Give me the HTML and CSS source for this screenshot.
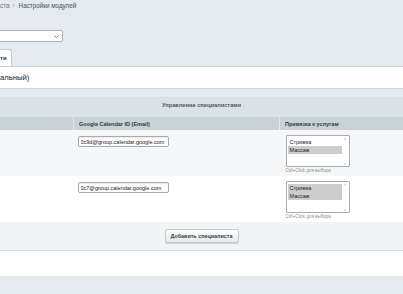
FILE: index.html
```html
<!DOCTYPE html>
<html lang="ru">
<head>
  <meta charset="UTF-8">
  <title>Настройки модулей</title>
  <link rel="stylesheet" href="styles.css">
</head>
<body>

  <!-- Хлебные крошки -->
  <div class="crumbs">
    <span class="crumb">ста</span>
    <span class="crumb-sep">›</span>
    <a class="crumb-link" href="#">Настройки модулей</a>
  </div>

  <!-- Выбор модуля -->
  <div class="module-pick">
    <div class="fake-select">
      <svg class="chevron" width="5" height="3" viewBox="0 0 5 3"><path d="M0.5 0.5 L2.5 2.5 L4.5 0.5" fill="none" stroke="#555" stroke-width="0.8"/></svg>
    </div>
  </div>

  <div class="tabs">
    <span class="tab">ти</span>
  </div>

  <div class="title-box">альный)</div>

  <div class="section-bar">Управление специалистами</div>

  <table class="spec-table">
    <thead>
      <tr>
        <th class="col-name"></th>
        <th class="col-cal">Google Calendar ID (Email)</th>
        <th class="col-serv">Привязка к услугам</th>
      </tr>
    </thead>
    <tbody>
      <tr class="row-alt">
        <td></td>
        <td><input class="cal-input" type="text" value="0c9d@group.calendar.google.com"></td>
        <td>
          <div class="listbox">
            <div class="options">
              <div class="opt">Стрижка</div>
              <div class="opt selected">Массаж</div>
            </div>
            <div class="scroll"><span>˄</span><span>˅</span></div>
          </div>
          <div class="hint">Ctrl+Click для выбора</div>
        </td>
      </tr>
      <tr>
        <td></td>
        <td><input class="cal-input" type="text" value="0c7@group.calendar.google.com"></td>
        <td>
          <div class="listbox">
            <div class="options">
              <div class="opt selected">Стрижка</div>
              <div class="opt selected">Массаж</div>
            </div>
            <div class="scroll"><span>˄</span><span>˅</span></div>
          </div>
          <div class="hint">Ctrl+Click для выбора</div>
        </td>
      </tr>
      <tr class="row-add">
        <td colspan="3"><button class="add-btn">Добавить специалиста</button></td>
      </tr>
    </tbody>
  </table>

  <div class="form-bottom"></div>

</body>
</html>
```

FILE: styles.css
```css
body {
  margin: 0;
  font-family: "Liberation Sans", Arial, sans-serif;
  background: #e4eaed;
  color: #333;
  overflow: hidden;
}

.crumbs {
  height: 10px;
  display: flex;
  align-items: center;
  gap: 3px;
  font-size: 6.3px;
  color: #6b7780;
}

.crumb-sep {
  color: #8a959c;
}

.crumb-link {
  margin-left: 1px;
  color: #3d5566;
  text-decoration: none;
}

.module-pick {
  margin-top: 20px;
}

.fake-select {
  width: 65px;
  height: 12px;
  margin-left: -2px;
  box-sizing: border-box;
  border: 1px solid #a9b4b9;
  border-radius: 2px;
  background: #fff;
  display: flex;
  align-items: center;
  justify-content: flex-end;
  padding-right: 3px;
}

.tabs {
  margin-top: 7px;
  height: 17px;
  display: flex;
}

.tab {
  width: 14px;
  margin-left: -2px;
  box-sizing: border-box;
  border: 1px solid #c3ccd0;
  border-bottom: none;
  border-radius: 0 3px 0 0;
  background: #fff;
  font-size: 6px;
  font-weight: bold;
  padding: 5px 0 0 1px;
  color: #333;
}

.title-box {
  height: 21px;
  line-height: 21px;
  background: #fff;
  border-top: 1px solid #c9d1d5;
  border-bottom: 1px solid #cfd6d9;
  font-size: 7.7px;
  color: #222;
}

.section-bar {
  margin-top: 8px;
  height: 20px;
  line-height: 16px;
  background: #dbe2e5;
  text-align: center;
  font-size: 5.7px;
  font-weight: bold;
  color: #4a5860;
}

.spec-table {
  width: 100%;
  border-collapse: collapse;
  font-size: 5.5px;
}

.spec-table th {
  height: 13px;
  padding: 0 0 0 5px;
  background: #c9d2d6;
  text-align: left;
  font-weight: bold;
  color: #2f3a40;
  border-left: 1px solid #e4e9eb;
}

.spec-table th:first-child {
  border-left: none;
}

.col-name {
  width: 68px;
}

.col-cal {
  width: 200px;
}

.spec-table td {
  padding: 5px 0 0 4px;
  vertical-align: top;
  height: 41px;
  background: #fff;
}

.spec-table tr.row-alt td {
  background: #f5f7f8;
}

.spec-table td:last-child {
  padding-left: 6px;
}

.cal-input {
  width: 91px;
  height: 11px;
  box-sizing: border-box;
  margin: 1px 0 0;
  padding: 0 2px;
  border: 1px solid #a3acb1;
  border-radius: 2px;
  font-family: inherit;
  font-size: 5.5px;
  color: #222;
  background: #fff;
  box-shadow: inset 0 1px 1px rgba(0, 0, 0, 0.08);
}

.listbox {
  width: 64px;
  height: 32px;
  box-sizing: border-box;
  border: 1px solid #a6aeb2;
  border-radius: 1px;
  background: #fff;
  display: flex;
}

.options {
  flex: 1;
  padding: 2px 0 0 1px;
}

.opt {
  height: 8px;
  line-height: 8px;
  padding-left: 2px;
  font-size: 5.5px;
  color: #222;
}

.opt.selected {
  background: #cdcdcd;
}

.scroll {
  width: 7px;
  display: flex;
  flex-direction: column;
  justify-content: space-between;
  align-items: center;
  font-size: 4px;
  color: #aaa;
  line-height: 5px;
}

.hint {
  margin-top: 1px;
  font-size: 4.5px;
  color: #8c8c8c;
}

.spec-table tr.row-add td {
  height: 28px;
  padding: 0;
  background: #f2f5f6;
  text-align: center;
  vertical-align: middle;
  border-bottom: 1px solid #d5dcdf;
}

.add-btn {
  width: 74px;
  height: 14px;
  padding: 0;
  font-family: inherit;
  font-size: 5.4px;
  font-weight: bold;
  color: #3a3f42;
  border: 1px solid #c4ccd0;
  border-radius: 2px;
  background: linear-gradient(#ffffff, #e4eaec);
  box-shadow: 0 1px 1px rgba(0, 0, 0, 0.15);
}

.form-bottom {
  height: 25px;
  background: #fff;
}
```
